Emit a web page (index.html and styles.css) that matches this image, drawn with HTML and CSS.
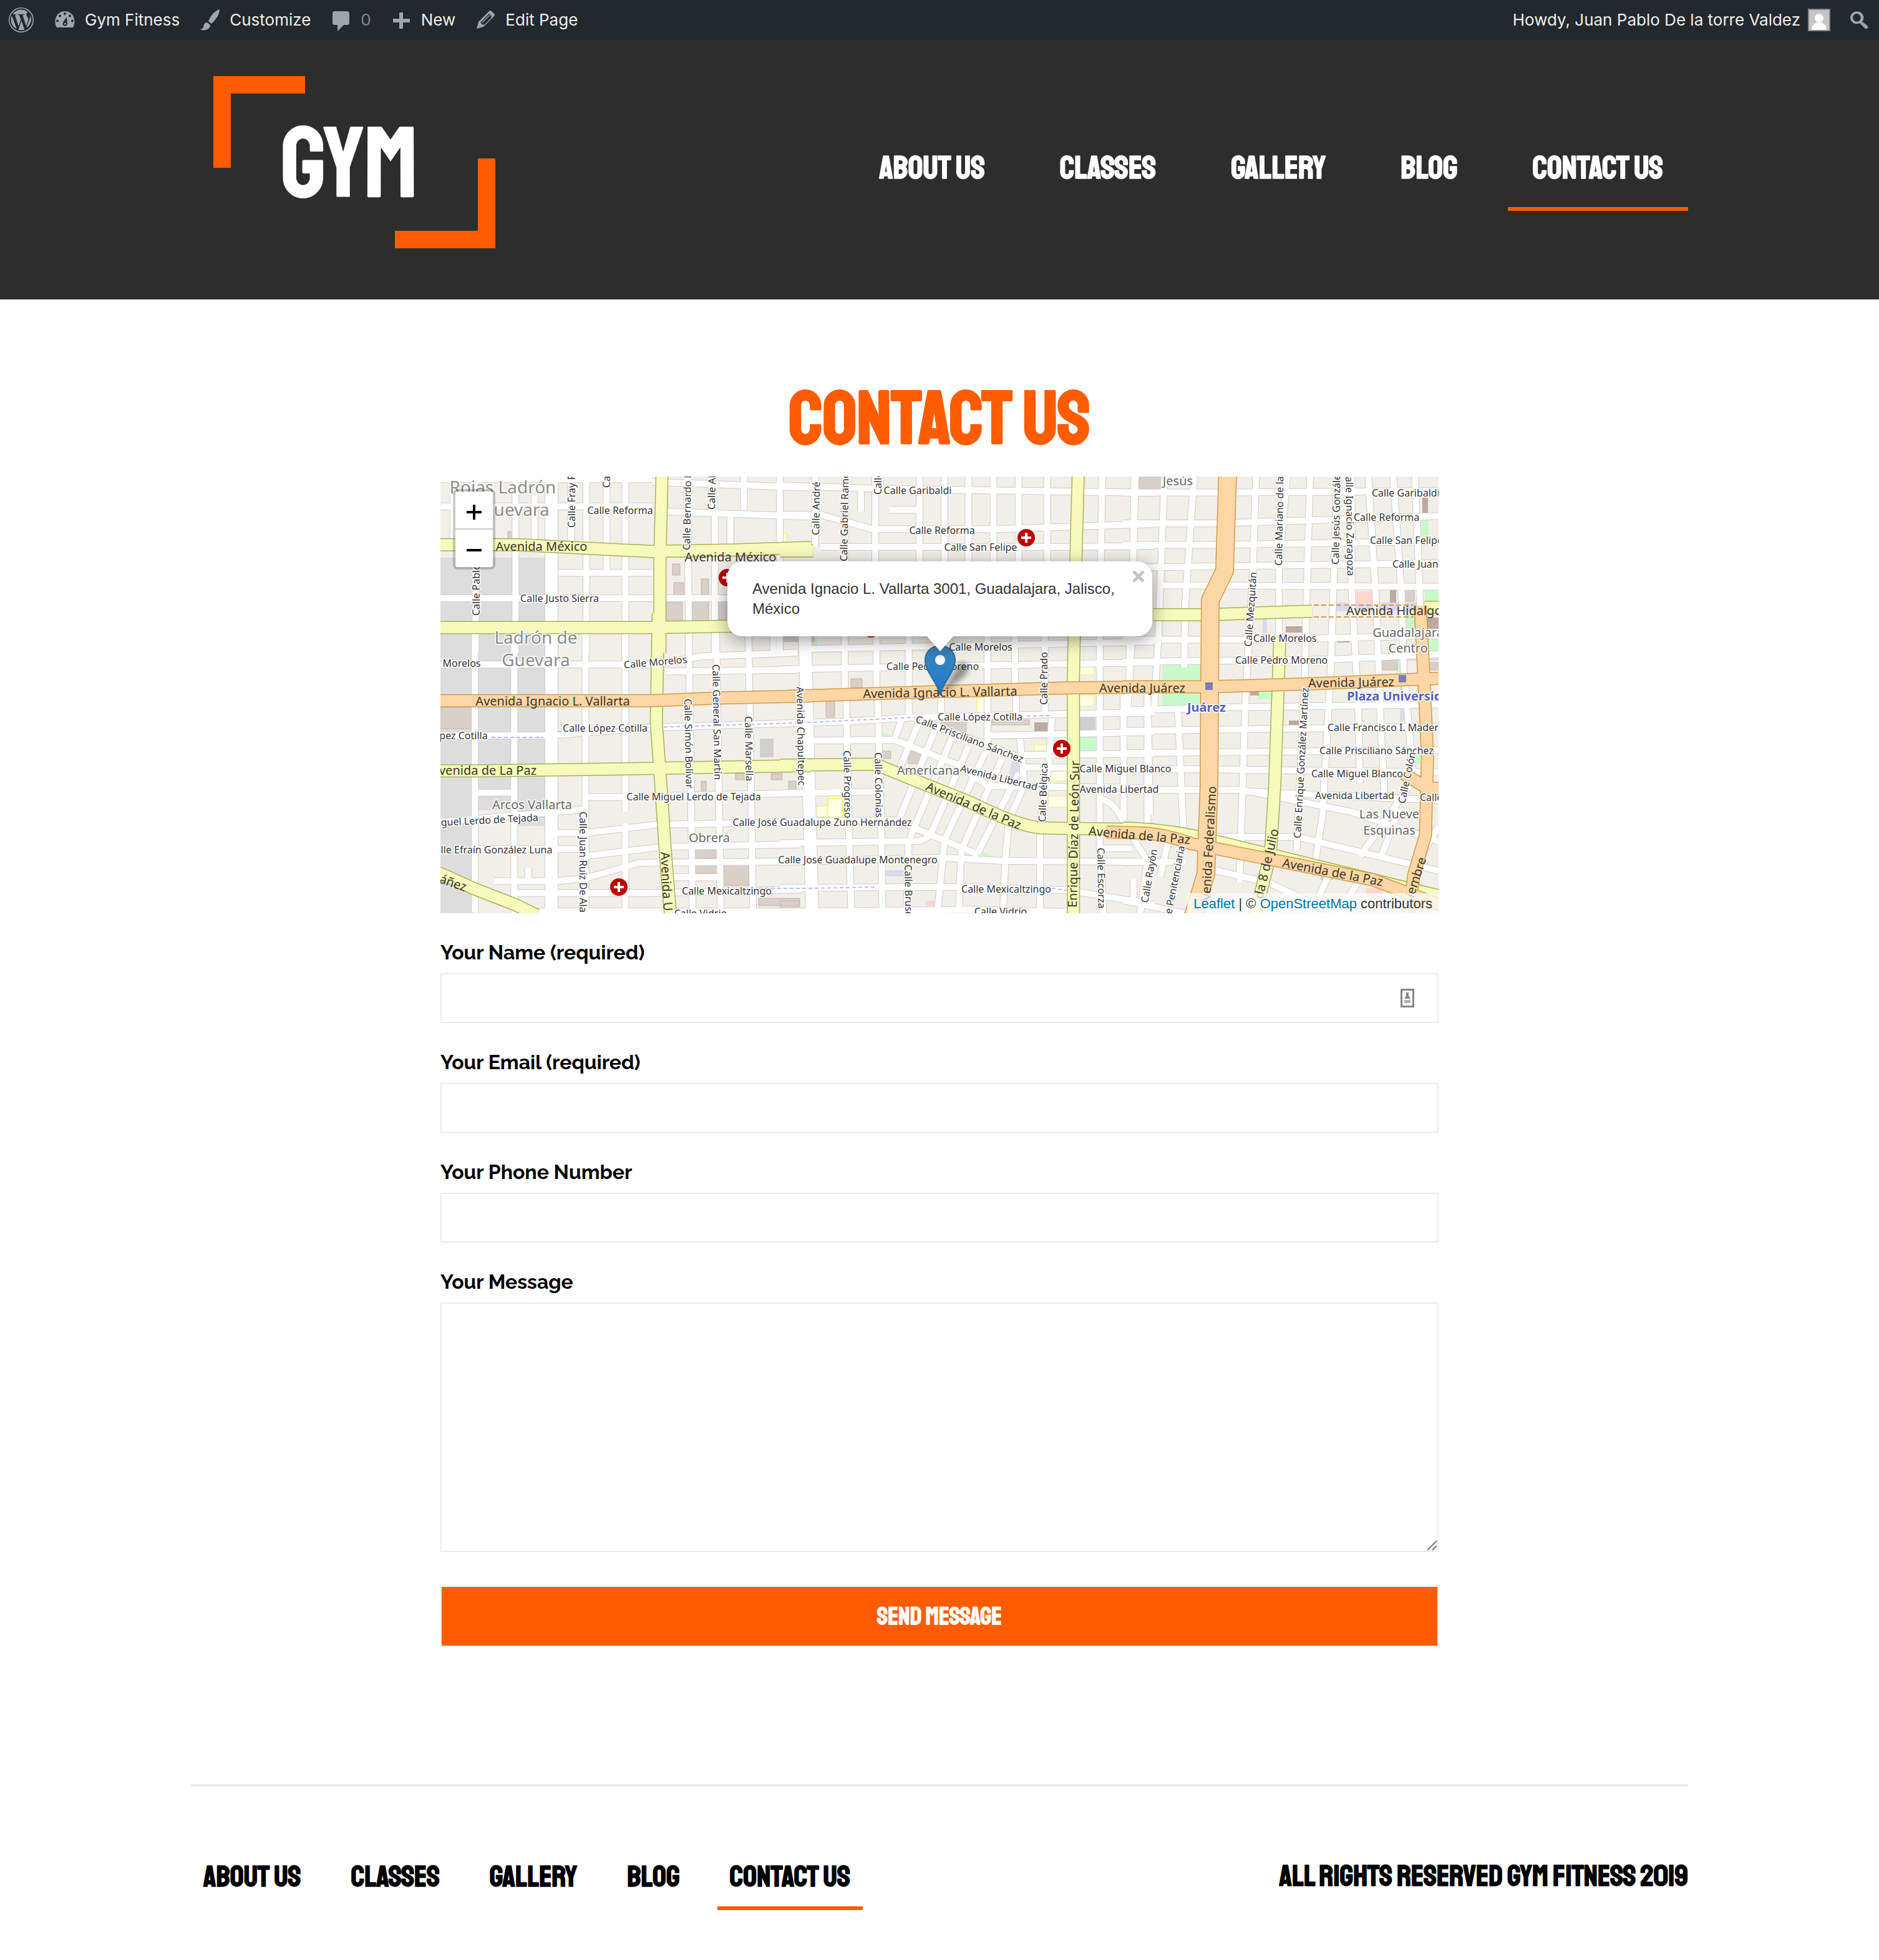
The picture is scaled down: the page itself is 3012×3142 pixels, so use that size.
FILE: index.html
```html
<!DOCTYPE html>
<html lang="en">
<head>
<meta charset="utf-8">
<title>Contact Us – Gym Fitness</title>
<link rel="stylesheet" href="styles.css">
</head>
<body>
<nav class="adminbar" aria-label="Toolbar">
  <div class="adminbar-group">
    <a class="admin-item" href="#" aria-label="About WordPress"><svg class="admin-icon" viewBox="0 0 40 40"><path fill-rule="evenodd" d="M20 0a20 20 0 1 0 0 40a20 20 0 0 0 0-40zM20 1.600a18.400 18.400 0 1 1 0 36.800a18.400 18.400 0 0 1 0-36.800z"/><path d="M3.600 20c0 6.500 3.800 12.100 9.300 14.700L5.100 13.300A16.300 16.300 0 0 0 3.600 20zM31.100 19.200c0-2-.7-3.400-1.400-4.500-.8-1.400-1.600-2.600-1.600-4 0-1.600 1.200-3 2.900-3h.2A16.400 16.400 0 0 0 6.300 11h1c1.700 0 4.400-.2 4.400-.2.9 0 1 1.200.1 1.300l-1.900.2 6 17.800 3.600-10.800-2.600-7-1.700-.2c-.9 0-.8-1.400.1-1.300 0 0 2.700.2 4.300.2 1.700 0 4.400-.2 4.400-.2.9 0 1 1.200.1 1.300l-1.900.2 6 17.600 1.600-5.500c.9-2.300 1.300-3.900 1.300-5.200zM20.300 21.400l-4.900 14.300a16.400 16.400 0 0 0 10-.3l-.1-.2zM34.400 12.100a12.600 12.600 0 0 1-1 6.100l-5 14.500A16.400 16.400 0 0 0 34.400 12.100z"/></svg></a>
    <a class="admin-item" href="#"><svg class="admin-icon" viewBox="0 0 40 40"><path fill-rule="evenodd" d="M7 32C1 22 6 6 20 6s19 16 13 26zM20 8a2 2 0 1 0 0 4a2 2 0 0 0 0-4zM12 11.500a2 2 0 1 0 0 4a2 2 0 0 0 0-4zM28 11.500a2 2 0 1 0 0 4a2 2 0 0 0 0-4zM8 19.500a2 2 0 1 0 0 4a2 2 0 0 0 0-4zM32 19.500a2 2 0 1 0 0 4a2 2 0 0 0 0-4zM23 15L17 24c-3 6 7 8 7 2z"/><circle cx="20.500" cy="26" r="1.500"/></svg>Gym Fitness</a>
    <a class="admin-item" href="#"><svg class="admin-icon" viewBox="0 0 40 40"><path d="M36 3c-7 2-14 9-18 19l5 4C31 19 36 10 36 3zM16 24c-5 0-5 4-6 7s-3 4-6 4c7 3 17 1 17-7z"/></svg>Customize</a>
    <a class="admin-item admin-muted" href="#"><svg class="admin-icon" viewBox="0 0 40 40"><path d="M10 6h20q4 0 4 4v14q0 4-4 4h-5L15 38V28h-5q-3 0-3-4V10q0-4 3-4z"/></svg>0</a>
    <a class="admin-item" href="#"><svg class="admin-icon" viewBox="0 0 40 40"><path d="M17 8h6v10h11v6H23v10h-6V24H7v-6h10z"/></svg>New</a>
    <a class="admin-item" href="#"><svg class="admin-icon" viewBox="0 0 40 40"><path fill-rule="evenodd" d="M26 6q2-2 4 0l4 4q2 2 0 4L17 31 6 34l3-11zM12 24l4 4 14-14-4-4zM14 24L26 12l1 1-12 12zM17 27l12-12 1 1-12 12z"/></svg>Edit Page</a>
  </div>
  <div class="adminbar-group">
    <a class="admin-item" href="#">Howdy, Juan Pablo De la torre Valdez<svg class="avatar" viewBox="0 0 36 36"><path fill="#82878c" d="M0 0h36v36H0z"/><path fill="#c5c5c5" d="M2 2h32v32H2z"/><circle cx="18" cy="15" r="7" fill="#fff"/><path fill="#fff" d="M6 34q0-9 8-12h8q8 3 8 12z"/></svg></a>
    <button class="admin-search" type="button" aria-label="Search"><svg class="admin-icon" viewBox="0 0 40 40"><path fill-rule="evenodd" d="M16 5a11 11 0 1 0 5 20.500l9 9q4 3 6-1 0-2-2-4l-8.500-6.500A11 11 0 0 0 16 5zM16 9a7 7 0 1 1 0 14a7 7 0 0 1 0-14z"/></svg></button>
  </div>
</nav>

<header class="site-header">
  <div class="container header-row">
    <a class="logo" href="#"><svg class="logo-svg" viewBox="0 0 452 276" role="img" aria-label="Gym">
      <path class="logo-mark" d="M0 0h147v28H28v119H0zM424 132h28v144H291v-28h133z"/>
      <text class="logo-text" x="108" y="193">GYM</text>
    </svg></a>
    <nav class="main-menu" aria-label="Main">
      <a href="#">About Us</a><a href="#">Classes</a><a href="#">Gallery</a><a href="#">Blog</a><a class="current" href="#" aria-current="page">Contact Us</a>
    </nav>
  </div>
</header>

<main class="content">
  <h1>Contact Us</h1>
  <div class="map">
    <svg class="map-tiles" viewBox="0 0 1600 700" preserveAspectRatio="xMidYMid slice">
      <defs>
        <g id="streets">
          <g transform="matrix(.3827 0 0 .3333 -6 -184)"><path d="M163 552V1400M330 552V1400M410 640V860M563 552V880M627 552V1400M712 552V1015M790 552V1400M485 552V1400M1050 552L1057 1400M1145 552L1165 720V1400M1230 740V890M1287 552V715M1437 552V1400M16 565H905M905 578L1568 605M16 695H905M905 718L1568 745M510 1015H905M16 1137H1220M70 640V880"/></g>
          <g transform="matrix(.3827 0 0 .4209 -6 236)"><path d="M160 0V1100M325 0V1100M480 0V1100M623 0V1100M790 0V715M790 760V1100M1055 0L1072 1095M1170 0L1190 1095M1305 0L1325 1095M1410 0V115M16 155H920L1100 125L1510 110M955 182L1510 175M16 425H480L900 395L1510 378M170 643H320M620 660H780M960 655L1520 645M16 755L430 722L610 708M500 797H620L920 765L1520 755M160 858H610M620 885L940 850L1520 840M500 980L620 970L850 910L1520 905M240 980H500M980 965H1180M330 1025H900L1530 1012M330 1095H1530M383 930V980"/></g>
          <g transform="matrix(.3827 0 0 .3333 544 -24)"><path d="M148 72V410M275 72V480M400 72V840M585 72V480M690 72V480M790 72V480M895 72V480M1000 72V480M1120 72V480M1350 72L1345 480M1490 72L1480 480M0 115L400 130L1568 150M0 255H170L390 325H900L1568 300M460 232H580M340 130V240M170 410H1220L1568 405M130 900L800 885L1568 865M0 1000L400 990L1568 965M272 840V1130M405 840V1130M540 840V1130M675 840V1130M870 840V1110M985 840V1110M1110 840V1110M1340 840V1130M1465 840V1130"/></g>
          <g transform="matrix(.3827 0 0 .3333 544 336)"><path d="M278 40L285 500L300 1100M410 40L425 700L430 1100M540 40V150M540 740L530 1100M675 40V150M870 40V330M990 40V130M1110 40V130M1140 140L1130 340L1090 690V1100M1340 40V780L1355 1100M1440 40V640M1540 40V660M0 180L280 170L560 150L1568 125M130 262L480 258L750 380L870 480L1568 490M870 238L1568 220M1005 238L1025 480M1020 330L1568 325M1020 390L1568 395M0 515L400 508M0 650L500 645L560 680L830 810M0 755L580 745Q620 740 640 690M0 845L680 825L930 840L1568 845M0 970L700 965L1200 980L1568 1050M0 1085L800 1075L1200 1085M510 160L480 258M580 180L500 400M650 210L500 640M720 250L545 730M790 290L630 720M860 320L690 740L660 1090M930 350L760 790L750 1090M1000 420L830 800M1020 490L960 640L945 830L935 1090M560 150L1010 345M1350 545Q1400 560 1440 650M1480 730L1540 840L1510 1090M1350 780H1475M1482 930V1020"/></g>
          <g transform="matrix(.3333 0 0 .4719 1094 -24)"><path d="M55 51L45 580L20 860M200 51L170 600L150 840M342 51L300 480L295 700M640 51L625 380L590 800L560 1430M790 51L750 360V600M900 51L880 550L875 760L835 1320M1030 51L1000 700L960 1200L925 1360M1180 51L1215 440L1240 900L1260 1150M1100 51V440L1130 800L1140 1090M1300 51L1340 450L1350 700L1400 1100M1405 51L1430 500M120 850L130 1200M265 850L290 1240M0 105H450L1518 100M0 210H450L1518 185M0 283H450L1518 270M0 360L1518 345M180 420L1518 425M0 605H700L1518 590M0 680L1000 672L1518 655M0 845L500 835L1518 825M0 915L1518 900M0 990L1518 980M0 1045H400L1518 1055M0 1115H570L1100 1190L1518 1290M570 1120L1518 1150M450 1275H840L1518 1390M450 1390L700 1430L1000 1530M0 1360H300M0 1490L330 1540M80 1540L145 1330M180 1410L220 1280M1140 1340L1380 1100M1000 1390L900 1540M1240 1345L1330 1180M1518 1240L1440 1330M1130 1430L1030 1540"/></g>
        </g>
        <g id="greens">
          <g transform="matrix(.3827 0 0 .3333 -6 -184)"><path d="M944 540L935 950V1400M0 880H340L900 912L1240 905L1570 893M0 1278H905L1700 1262"/></g>
          <g transform="matrix(.3827 0 0 .4209 -6 236)"><path d="M928 -40L920 380L935 560L958 870L980 1120M0 560H170L620 555L940 550L1568 540M0 945L160 1010L330 1070L420 1110"/></g>
          <g transform="matrix(.3827 0 0 .3333 544 -24)"><path d="M1250 60L1240 480L1228 1130M0 430H140"/></g>
          <g transform="matrix(.3827 0 0 .3333 544 336)"><path d="M1230 30V1110M0 380L400 375L560 450L800 560Q1000 675 1100 682L1568 690"/></g>
          <g transform="matrix(.3333 0 0 .4719 1094 -24)"><path d="M145 520H400L910 508M755 590L745 800L730 1100L710 1330L630 1560M1450 495H1540M0 1245Q250 1250 450 1290L1518 1475"/></g>
        </g>
        <g id="mains">
          <g transform="matrix(.3827 0 0 .4209 -6 236)"><path d="M0 293L900 293L1200 282L1568 275"/></g>
          <g transform="matrix(.3827 0 0 .3333 544 -24)"><path d="M0 1130L560 1110L1200 1088L1460 1085"/></g>
          <g transform="matrix(.3333 0 0 .4719 1094 -24)"><path d="M0 765H400L900 755L1530 736M-80 1258L100 1262Q200 1265 330 1298L700 1350L1200 1420L1540 1510M1430 490L1445 700L1465 1000L1455 1270L1400 1400L1370 1560M1350 1060L1465 1110H1530"/></g>
        </g>
      </defs>
      <path fill="#f2efe9" d="M0 0h1600v700H0z"/>
      <path fill="#ddd" d="M0 130H168V560H118V535H55V700H0z"/>
      <path fill="#c8facc" d="M1157 300h62v70h-62zM1310 343h24v14h-24zM1545 222h18v22h-18zM1572 68h12v28h-12zM1578 180h22v20h-22zM1584 260h16v24h-16zM1024 416h26v24h-26zM596 255h8v20h-8zM706 408l18 8v6h-18zM865 600l20 8h-20zM1098 548l34 10h-34zM1532 296h6v20h-6zM1558 444h14v16h-14z"/>
      <path fill="#dadaea" d="M1318 226h7v36h-7zM1435 202h165v14H1435zM1538 222h10v170h-10zM1470 288h130v7H1470zM1051 348h8v105h-8zM1495 180h8v80h-8zM1024 440h26v10h-26zM916 456h14l-8 32h-12zM711 631h32v10h-32z"/>
      <path fill="#ffffe5" stroke="#f8f09a" stroke-width="2" d="M602 546h18v-34h26v34h-2v-30h-24v30zM602 528h20v-16h24v34h-44zM860 354h12v26h-12zM1024 350h24v18h-24zM1024 302h24v16h-24zM978 472h28v16h-28zM974 512h34v18h-34zM547 91h8v14h-8zM952 430h22v10h-22z"/>
      <path fill="#d9d0c9" stroke="#c5b5aa" d="M0 370h50v34H0zM372 140h12v18h-12zM374 170h16v20h-16zM418 164h12v24h-12zM400 200h30v34h-30zM362 202h26v28h-26zM446 200h14v30h-14zM408 596h36v16h-36zM408 622h36v14h-36zM454 622h40v34h-40zM510 676h66v12h-66zM618 360h14v26h-14zM658 324h18v14h-18zM750 438h20v22h-20zM704 440h18v12h-18zM803 394h40v16h-40zM884 390h60v8h-60zM418 488h8v16h-8zM473 476h14v10h-14zM530 476h18v10h-18zM558 488h12v14h-12zM545 680h30v14h-30zM1118 0h38v20h-38zM1541 180h20v20h-20zM1510 294h24v16h-24zM1412 632h18v14h-18zM1584 298h16v12h-16zM108 88h8v12h-8z"/>
      <path fill="#bca9a0" d="M1355 240h26v10h-26zM1437 260h20v6h-20zM1360 391h16v9h-16zM1522 182h10v20h-10zM1574 34h9v24h-9zM1582 226h18v18h-18zM952 394h22v14h-22zM1298 345h14v6h-14z"/>
      <path fill="#ffd5d0" d="M1468 184h26v20h-26zM778 680h14v8h-14zM1484 660h26v12h-26z"/>
      <path fill="#cfcfcf" d="M512 420h22v30h-22zM1024 384h26v22h-26z"/>
      <use href="#streets" class="street-case"/>
      <path class="avenue-case" d="M178 0V700M584 240L590 480L596 700M544 254H600"/>
      <use href="#streets" class="street"/>
      <path class="avenue" d="M178 0V700M584 240L590 480L596 700"/>
      <path class="cycleway" d="M82 418H165M188 409L338 402L570 395L760 386M940 384L980 383M500 660L590 660L700 658M980 660L1010 664"/>
      <use href="#greens" class="green-case"/>
      <use href="#greens" class="green"/>
      <use href="#mains" class="main-case"/>
      <path class="trunk-case" d="M1262 -10L1257 151L1234 198L1232 495L1227 637L1205 710"/>
      <use href="#mains" class="main-road"/>
      <path class="trunk" d="M1262 -10L1257 151L1234 198L1232 495L1227 637L1205 710"/>
      <path class="service" d="M1400 206H1560M1400 225H1560"/>

      <g class="hospital">
        <g transform="translate(939 98)"><circle r="14"/><path d="M-8-2h6v-6h4v6h6v4h-6v6h-4v-6h-6z"/></g>
        <g transform="translate(996 436)"><circle r="14"/><path d="M-8-2h6v-6h4v6h6v4h-6v6h-4v-6h-6z"/></g>
        <g transform="translate(286 658)"><circle r="14"/><path d="M-8-2h6v-6h4v6h6v4h-6v6h-4v-6h-6z"/></g>
        <g transform="translate(460 162)"><circle r="14"/><path d="M-8-2h6v-6h4v6h6v4h-6v6h-4v-6h-6z"/></g>
        <g transform="translate(690 244)"><circle r="14"/><path d="M-8-2h6v-6h4v6h6v4h-6v6h-4v-6h-6z"/></g>
      </g>
      <path fill="#7981b0" d="M1226 330h12v12h-12zM1536 318h12v12h-12z"/>

      <g class="label">
        <g class="mid">
          <text x="288" y="60">Calle Reforma</text><text x="191" y="201">Calle Justo Sierra</text>
          <text x="34" y="305">Morelos</text><text transform="translate(345 303) rotate(-5)">Calle Morelos</text>
          <text x="37" y="421">pez Cotilla</text><text x="264" y="409">Calle López Cotilla</text>
          <text x="406" y="519">Calle Miguel Lerdo de Tejada</text><text transform="translate(79 556) rotate(-3)">guel Lerdo de Tejada</text>
          <text x="90" y="604">lle Efraín González Luna</text><text x="459" y="670">Calle Mexicaltzingo</text><text x="417" y="706">Calle Vidrio</text>
          <text x="612" y="560">Calle José Guadalupe Zuno Hernández</text><text x="669" y="620">Calle José Guadalupe Montenegro</text>
          <text x="765" y="28">Calle Garibaldi</text><text x="804" y="92">Calle Reforma</text><text x="866" y="119">Calle San Felipe</text>
          <text x="866" y="279">Calle Morelos</text><text x="789" y="310">Calle Pedro Moreno</text><text x="865" y="391">Calle López Cotilla</text>
          <text transform="translate(846 426) rotate(21)">Calle Prisciliano Sánchez</text><text transform="translate(894 488) rotate(14)">Avenida Libertad</text>
          <text x="1098" y="474">Calle Miguel Blanco</text><text x="1088" y="507">Avenida Libertad</text>
          <text x="907" y="667">Calle Mexicaltzingo</text><text x="898" y="703">Calle Vidrio</text>
        </g>
        <text x="1493" y="32">Calle Garibaldi</text><text x="1464" y="71">Calle Reforma</text><text x="1490" y="108">Calle San Felipe</text><text x="1526" y="146">Calle Juan</text>
        <text x="1303" y="265">Calle Morelos</text><text x="1274" y="300">Calle Pedro Moreno</text><text x="1422" y="408">Calle Francisco I. Madero</text>
        <text x="1409" y="445">Calle Prisciliano Sánchez</text><text x="1396" y="482">Calle Miguel Blanco</text><text x="1402" y="517">Avenida Libertad</text><text x="1570" y="520">Calle</text>
        <text transform="translate(216 82) rotate(-90)">Calle Fray F</text><text transform="translate(63 223) rotate(-90)">Calle Pablo</text><text transform="translate(272 18) rotate(-90)">Calle</text>
        <text transform="translate(400 118) rotate(-89)">Calle Bernardo R</text><text transform="translate(440 53) rotate(-89)">Calle Al</text><text transform="translate(607 94) rotate(-89)">Calle André</text>
        <text transform="translate(652 136) rotate(-89)">Calle Gabriel Ramo</text><text transform="translate(707 29) rotate(-90)">Calle</text><text transform="translate(973 366) rotate(-90)">Calle Prado</text>
        <text transform="translate(970 554) rotate(-88)">Calle Bélgica</text><text transform="translate(1134 684) rotate(-80)">Calle Rayón</text><text transform="translate(1172 702) rotate(-79)">e Penitenciaria</text>
        <text transform="translate(1349 143) rotate(-89)">Calle Mariano de la</text><text transform="translate(1440 141) rotate(-89)">Calle Jesús González</text><text transform="translate(1300 273) rotate(-86)">Calle Mezquitán</text>
        <text transform="translate(1379 580) rotate(-87)">Calle Enrique González Martínez</text><text transform="translate(1546 525) rotate(-78)">Calle Colón</text>
        <text transform="translate(1451 0) rotate(89)">alle Ignacio Zaragoza</text><text transform="translate(436 301) rotate(89)">Calle General San Martín</text><text transform="translate(391 356) rotate(89)">Calle Simón Bolívar</text>
        <text transform="translate(488 384) rotate(89)">Calle Marsella</text><text transform="translate(571 337) rotate(89)">Avenida Chapultepec</text><text transform="translate(223 537) rotate(90)">Calle Juan Ruiz De Ala</text>
        <text transform="translate(646 439) rotate(89)">Calle Progreso</text><text transform="translate(696 442) rotate(89)">Calle Colonias</text><text transform="translate(744 622) rotate(89)">Calle Bruse</text><text transform="translate(1053 595) rotate(89)">Calle Escorza</text>
      </g>
      <g class="label road">
        <g class="mid">
          <text x="162" y="119">Avenida México</text><text x="465" y="136">Avenida México</text><text x="180" y="367">Avenida Ignacio L. Vallarta</text><text transform="translate(801 353) rotate(-1)">Avenida Ignacio L. Vallarta</text>
          <text x="1125" y="346">Avenida Juárez</text><text transform="translate(1460 337) rotate(-1)">Avenida Juárez</text><text x="76" y="478">venida de La Paz</text>
          <text transform="translate(852 534) rotate(23)">Avenida de la Paz</text><text transform="translate(1120 582) rotate(5)">Avenida de la Paz</text><text transform="translate(1429 641) rotate(11)">Avenida de la Paz</text><text transform="translate(18 658) rotate(19)">áñez</text>
        </g>
        <text x="1452" y="222">Avenida Hidalgo</text>
        <text transform="translate(1020 691) rotate(-89)">Enrique Díaz de León Sur</text><text transform="translate(1234 679) rotate(-87)">venida Federalismo</text><text transform="translate(1318 678) rotate(-77)">da 8 de Julio</text>
        <text transform="translate(1560 676) rotate(-72)">iembre</text><text transform="translate(353 602) rotate(87)">Avenida U</text>
      </g>
      <g class="label area mid">
        <text x="100" y="27">Rojas Ladrón</text><text x="120" y="63">Guevara</text><text x="153" y="268">Ladrón de</text><text x="153" y="304">Guevara</text>
      </g>
      <g class="label suburb mid">
        <text x="147" y="533">Arcos Vallarta</text><text x="431" y="586">Obrera</text><text x="782" y="478">Americana</text><text x="1182" y="14">Jesús</text><text x="1551" y="257">Guadalajara</text><text x="1551" y="282">Centro</text><text x="1521" y="548">Las Nueve</text><text x="1521" y="574">Esquinas</text>
      </g>
      <g class="label station"><text x="1197" y="377">Juárez</text><text x="1453" y="359">Plaza Universidad</text></g>

      <defs>
        <linearGradient id="pin" x1="0" y1="0" x2="0" y2="1"><stop offset="0" stop-color="#3f8cc4"/><stop offset="1" stop-color="#1f77c9"/></linearGradient>
        <filter id="soft"><feGaussianBlur stdDeviation="5"/></filter>
      </defs>
      <path d="M801 350L832 298Q858 298 838 322z" opacity=".4" filter="url(#soft)"/>
      <path fill="url(#pin)" stroke="#2e6c97" stroke-width="2" d="M801 350C796 328 777 314 777 294a24 23 0 0 1 48 0C825 314 806 328 801 350z"/>
      <circle cx="801" cy="294" r="8" fill="#fff"/>
    </svg>

    <div class="zoom">
      <button type="button" aria-label="Zoom in"><svg viewBox="0 0 26 26"><path d="M11 1h4v10h10v4H15v10h-4V15H1v-4h10z"/></svg></button>
      <button type="button" aria-label="Zoom out"><svg viewBox="0 0 26 26"><path d="M1 11h24v4H1z"/></svg></button>
    </div>
    <div class="popup">
      <p>Avenida Ignacio L. Vallarta 3001, Guadalajara, Jalisco, México</p>
      <button class="popup-close" type="button" aria-label="Close popup"><svg viewBox="0 0 20 20"><path d="M2 2l16 16M18 2L2 18"/></svg></button>
    </div>
    <div class="attribution"><a href="#">Leaflet</a> | © <a href="#">OpenStreetMap</a> contributors</div>
  </div>

  <form class="contact-form">
    <div class="field"><label for="name">Your Name (required)</label>
      <div class="with-icon"><input id="name" type="text"><svg class="autofill" viewBox="0 0 22 30"><path fill="none" stroke="#868686" stroke-width="3" d="M1.500 1.500h19v27h-19z"/><path fill="#868686" d="M9 6h4v5l3 5H6l3-5z"/><path fill="#b5b5b5" d="M6 18h10v5H6z"/></svg></div></div>
    <div class="field"><label for="email">Your Email (required)</label><input id="email" type="email"></div>
    <div class="field"><label for="phone">Your Phone Number</label><input id="phone" type="tel"></div>
    <div class="field"><label for="message">Your Message</label>
      <div class="with-icon"><textarea id="message"></textarea><svg class="grip" viewBox="0 0 18 18"><path d="M2 17L17 2M10 17l7-7"/></svg></div></div>
    <button class="send" type="submit">Send Message</button>
  </form>
</main>

<footer class="container site-footer">
  <nav class="footer-menu" aria-label="Footer">
    <a href="#">About Us</a><a href="#">Classes</a><a href="#">Gallery</a><a href="#">Blog</a><a class="current" href="#" aria-current="page">Contact Us</a>
  </nav>
  <p>All Rights Reserved Gym Fitness 2019</p>
</footer>
</body>
</html>
```
FILE: styles.css
```css
:root {
  --primary: #ff5c00;
  --line: #ebebeb;
  --heading: "Staatliches", "Liberation Sans", sans-serif;
  --body: "Raleway", "Lato", sans-serif;
}
* { box-sizing: border-box; }
body { margin: 0; background: #fff; color: #000; font-family: var(--body); }
a { color: inherit; text-decoration: none; }
button { font: inherit; border: 0; padding: 0; cursor: pointer; }
.container { width: calc(100% - 80px); max-width: 2400px; margin: 0 auto; }

/* Admin toolbar */
.adminbar {
  display: flex; justify-content: space-between; height: 64px;
  padding: 0 14px; background: #23282d; color: #eee;
  font: 26px/66px "Inter", "Roboto", sans-serif;
}
.adminbar-group { display: flex; gap: 28px; }
.admin-item { display: flex; align-items: center; gap: 12px; }
.adminbar-group:first-child .admin-item:first-child { margin-right: 2px; }
.admin-muted { color: #82878c; }
.admin-icon { display: block; width: 40px; height: 40px; fill: #a0a5aa; }
.avatar { width: 36px; height: 36px; }
.admin-search { display: flex; align-items: center; background: none; }
.admin-search .admin-icon { width: 36px; height: 36px; }

/* Header */
.site-header { background: #2d2d2d; padding: 58px 0 82px; }
.header-row { display: flex; justify-content: space-between; align-items: center; }
.logo { display: block; margin-left: 36px; }
.logo-svg { display: block; width: 452px; height: 276px; overflow: visible; }
.logo-mark { fill: var(--primary); }
.logo-text { fill: #fff; stroke: #fff; stroke-width: 2px; font: 160px var(--heading); }
.main-menu, .footer-menu { display: flex; gap: 40px; font-family: var(--heading); font-weight: 700; }
.main-menu { margin-top: 22px; color: #fff; font-size: 52px; line-height: 124px; }
.main-menu a { padding: 4px 40px 0; border-bottom: 6px solid transparent; }
.footer-menu a { padding: 16px 20px 0; border-bottom: 6px solid transparent; }
.main-menu .current, .footer-menu .current { border-color: var(--primary); }

/* Content */
.content { width: calc(100% - 80px); max-width: 1600px; margin: 0 auto; padding: 132px 0 220px; }
h1 { margin: 0 0 32px; color: var(--primary); font: 700 120px/120px var(--heading); text-align: center; }

/* Map */
.map { position: relative; height: 700px; overflow: hidden; background: #ddd; font-family: "Liberation Sans", Arial, sans-serif; }
.map-tiles { display: block; width: 100%; height: 100%; }
.map-tiles path { vector-effect: non-scaling-stroke; }
.street-case, .street, .green-case, .green, .main-case, .main-road, .avenue-case, .avenue, .trunk-case, .trunk, .cycleway, .service { fill: none; stroke-linejoin: round; }
.street-case { stroke: #cfccc8; stroke-width: 12px; }
.street { stroke: #fff; stroke-width: 10px; }
.avenue-case { stroke: #cfccc8; stroke-width: 22px; }
.avenue { stroke: #fff; stroke-width: 20px; }
.cycleway { stroke: #b9b9ff; stroke-width: 2px; stroke-dasharray: 6 4; }
.green-case { stroke: #a6b35a; stroke-width: 21px; }
.green { stroke: #f6fabb; stroke-width: 18px; }
.main-case { stroke: #cf9c48; stroke-width: 21px; }
.main-road { stroke: #fcd6a4; stroke-width: 18px; }
.trunk-case { stroke: #cf9c48; stroke-width: 30px; }
.trunk { stroke: #fcd6a4; stroke-width: 27px; }
.service { stroke: #cf9c48; stroke-width: 2px; stroke-dasharray: 8 4; }
.hospital circle { fill: #bf0000; }
.hospital path { fill: #fff; }
.label { font: 16px "Noto Sans", sans-serif; fill: #333; stroke: #fff; stroke-width: 3px; stroke-linejoin: round; paint-order: stroke; }
.road { font-size: 20px; fill: #3a3528; stroke: none; }
.area { font-size: 28px; fill: #8c8c8c; }
.suburb { font-size: 20px; fill: #666; }
.station { font-size: 20px; font-weight: 700; fill: #5563b8; }
.mid { text-anchor: middle; }
.zoom { position: absolute; top: 20px; left: 20px; border: 4px solid rgba(0, 0, 0, .2); border-radius: 8px; background-clip: padding-box; }
.zoom button { display: flex; align-items: center; justify-content: center; width: 60px; height: 60px; padding-top: 6px; background: #fff; }
.zoom button:first-child { height: 61px; border-bottom: 2px solid #ccc; border-radius: 4px 4px 0 0; }
.zoom button:last-child { border-radius: 0 0 4px 4px; }
.zoom svg { width: 26px; height: 26px; }
.popup { position: absolute; left: calc(50% - 340px); top: 136px; width: 681px; padding: 28px 40px; border-radius: 24px; background: #fff; color: #333; filter: drop-shadow(0 6px 14px rgba(0, 0, 0, .4)); }
.popup::after { content: ""; position: absolute; top: 100%; left: calc(50% - 21px); border: 21px solid transparent; border-top: 24px solid #fff; border-bottom: 0; }
.popup p { margin: 0; font-size: 24px; line-height: 32px; }
.popup-close { position: absolute; top: 14px; right: 12px; background: none; }
.popup-close svg { display: block; width: 20px; height: 20px; fill: none; stroke: #c3c3c3; stroke-width: 5; }
.attribution { position: absolute; right: 0; bottom: 0; padding: 2px 10px 0; background: rgba(255, 255, 255, .7); color: #333; font-size: 22px; line-height: 30px; }
.attribution a { color: #0078a8; }

/* Form */
.contact-form { display: grid; gap: 40px; padding-top: 40px; }
.field { display: grid; gap: 16px; }
label { padding-top: 6px; font-size: 32px; line-height: 34px; font-weight: 700; }
input, textarea { display: block; width: 100%; height: 80px; margin: 0; padding: 0 20px; border: 2px solid var(--line); border-radius: 0; background: #fff; font: 32px var(--body); }
textarea { height: 400px; padding: 20px; resize: none; }
.with-icon { position: relative; }
.autofill { position: absolute; top: 25px; right: 39px; width: 22px; height: 30px; }
.grip { position: absolute; right: 2px; bottom: 2px; width: 18px; height: 18px; fill: none; stroke: #777; stroke-width: 2; }
.send { height: 98px; margin-top: 14px; border: 2px solid var(--line); background: var(--primary); color: #fff; font: 700 40px/40px var(--heading); }

/* Footer */
.site-footer { display: flex; justify-content: space-between; align-items: center; padding: 80px 0; border-top: 4px solid var(--line); font: 700 48px/96px var(--heading); }
.site-footer p { margin: 8px 0 0; }
```
